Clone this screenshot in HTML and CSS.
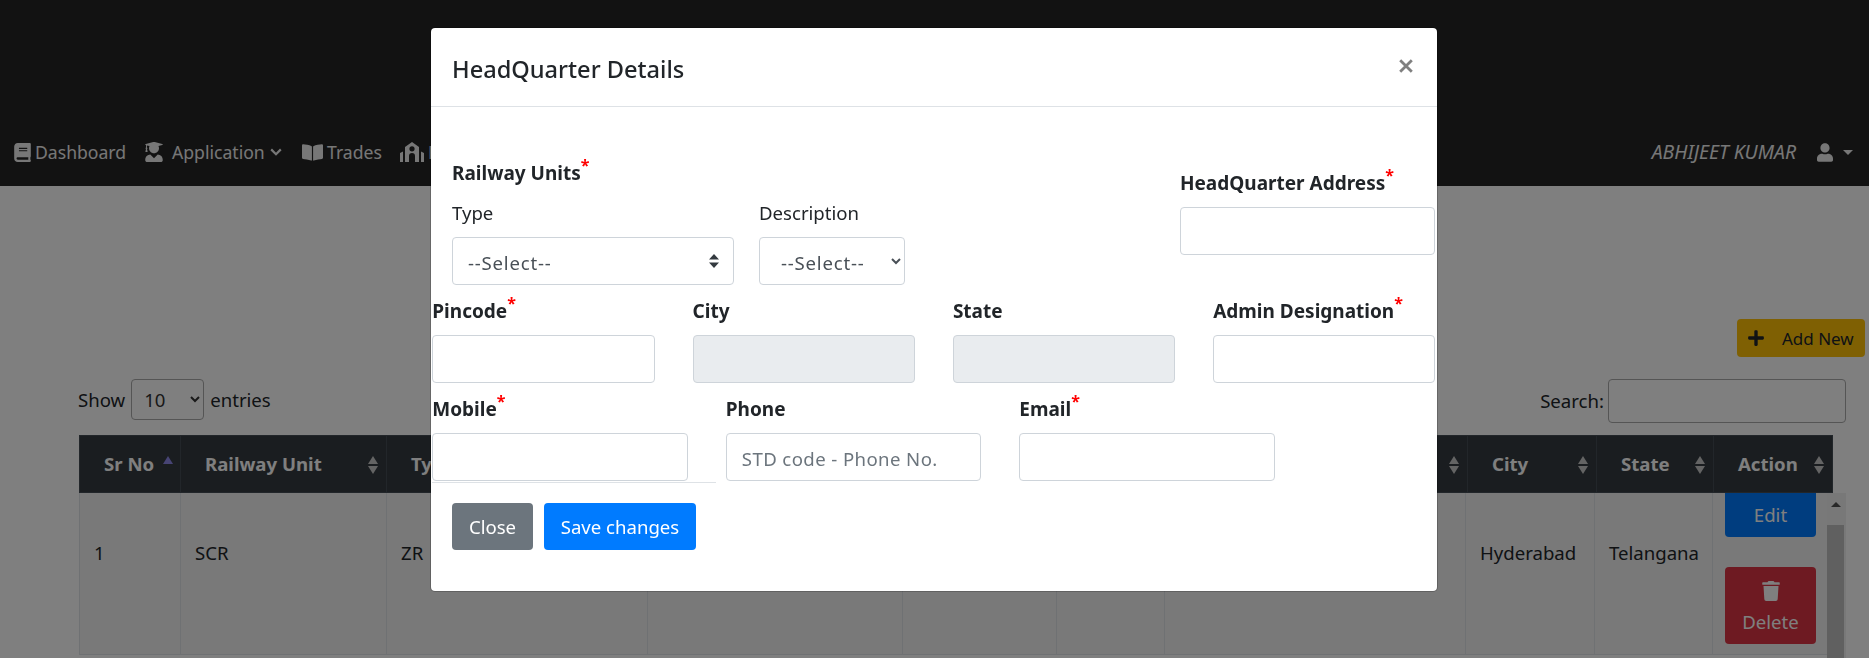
FILE: index.html
```html
<!doctype html>
<html>
<head>
<meta charset="utf-8">
<meta name="viewport" content="width=device-width, initial-scale=1.0">
<link rel="stylesheet" href="styles.css">
<title>HeadQuarter Details</title>
</head>
<body>

<nav class="topbar">
	<ul class="menu">
		<li class="menu-dash">
			<svg class="ico ico-book" viewBox="0 0 448 512"><path d="M448 360V24c0-13.3-10.7-24-24-24H96C43 0 0 43 0 96v320c0 53 43 96 96 96h328c13.3 0 24-10.7 24-24v-16c0-7.5-3.5-14.3-8.9-18.7-4.2-15.4-4.2-59.3 0-74.7 5.4-4.3 8.9-11.1 8.9-18.6zM128 134c0-3.3 2.7-6 6-6h212c3.3 0 6 2.7 6 6v20c0 3.3-2.7 6-6 6H134c-3.3 0-6-2.7-6-6v-20zm0 64c0-3.3 2.7-6 6-6h212c3.3 0 6 2.7 6 6v20c0 3.3-2.7 6-6 6H134c-3.3 0-6-2.7-6-6v-20zm253.4 250H96c-17.7 0-32-14.3-32-32 0-17.6 14.4-32 32-32h285.4c-1.9 17.1-1.9 46.9 0 64z"/></svg>
			Dashboard
		</li>
		<li class="menu-app">
			<svg class="ico ico-grad" viewBox="0 0 448 512"><path d="M319.4 320.6L224 416l-95.4-95.4C57.1 323.7 0 382.2 0 454.4v9.6c0 26.5 21.5 48 48 48h352c26.5 0 48-21.5 48-48v-9.6c0-72.2-57.1-130.7-128.6-133.8zM13.6 79.8l6.4 1.5v58.4c-7 4.2-12 11.5-12 20.3 0 8.4 4.6 15.4 11.1 19.7L3.5 242c-1.7 6.9 2.1 14 7.6 14h41.8c5.5 0 9.3-7.1 7.6-14l-15.6-62.3C51.4 175.4 56 168.4 56 160c0-8.8-5-16.1-12-20.3V87.1l66 15.9c-8.6 17.2-14 36.4-14 57 0 70.7 57.3 128 128 128s128-57.3 128-128c0-20.6-5.3-39.8-14-57l96.3-23.2c18.2-4.4 18.2-27.1 0-31.5l-190.4-46c-13-3.1-26.7-3.1-39.7 0L13.6 48.2c-18.1 4.4-18.1 27.2 0 31.6z"/></svg>
			<span class="app-label">Application</span>
			<svg class="chev" viewBox="0 0 12 8"><path d="M1.2 1.4 6 6.200l4.800-4.800" fill="none" stroke="currentColor" stroke-width="2.200"/></svg>
		</li>
		<li class="menu-trades">
			<svg class="ico ico-open" viewBox="0 0 576 512"><path d="M542.22 32.05c-54.79 3.11-163.69 14.43-230.96 55.59-4.64 2.84-7.27 7.89-7.27 13.17v363.87c0 11.55 12.63 18.85 23.28 13.49 69.21-34.83 169.3-44.33 218.79-46.93 16.89-.89 30.02-14.43 30.02-30.66V62.75c.01-17.71-15.35-31.74-33.86-30.7zM264.73 87.64C197.47 46.48 88.57 35.17 33.78 32.05 15.27 31.01 0 45.04 0 62.75V400.6c0 16.24 13.13 29.78 30.02 30.66 49.51 2.6 149.65 12.11 218.86 46.96 10.62 5.35 23.12-1.94 23.12-13.46V100.63c0-5.29-2.62-10.14-7.27-12.99z"/></svg>
			Trades
		</li>
		<li class="menu-hq">
			<svg class="ico ico-hq" viewBox="0 0 24 20"><path fill-rule="evenodd" d="M12 0l7 5v15h-4v-6a3 3 0 0 0-6 0v6H5V5zm0 4.200a2.600 2.600 0 1 0 0 5.200 2.600 2.600 0 0 0 0-5.200zM0 11l3-1.600V20H0zm24 0-3-1.600V20h3z"/></svg>
			HQ
		</li>
	</ul>
	<div class="who">
		<span class="who-name">ABHIJEET KUMAR</span>
		<svg class="ico ico-user" viewBox="0 0 448 512"><path d="M224 256c70.7 0 128-57.3 128-128S294.7 0 224 0 96 57.3 96 128s57.3 128 128 128zm89.6 32h-16.7c-22.2 10.2-46.9 16-72.9 16s-50.6-5.8-72.9-16h-16.7C60.2 288 0 348.2 0 422.4V464c0 26.5 21.5 48 48 48h352c26.5 0 48-21.5 48-48v-41.6c0-74.2-60.2-134.4-134.4-134.4z"/></svg>
		<span class="caret"></span>
	</div>
</nav>

<main class="page">
	<div class="page-actions">
		<button class="btn-add">
			<svg class="ico ico-plus" viewBox="0 0 448 512"><path d="M416 208H272V64c0-17.67-14.33-32-32-32h-32c-17.67 0-32 14.33-32 32v144H32c-17.67 0-32 14.33-32 32v32c0 17.67 14.33 32 32 32h144v144c0 17.67 14.33 32 32 32h32c17.67 0 32-14.33 32-32V304h144c17.67 0 32-14.33 32-32v-32c0-17.67-14.33-32-32-32z"/></svg>
			Add New
		</button>
	</div>

	<div class="dt">
		<div class="dt-controls">
			<label class="dt-length">Show
				<select class="dt-select"><option>10</option></select>
				entries</label>
			<label class="dt-search">Search: <input class="dt-input" type="text"></label>
		</div>

		<table class="dt-head">
			<colgroup>
				<col class="c1"><col class="c2"><col class="c3"><col class="c4"><col class="c5">
				<col class="c6"><col class="c7h"><col class="c8h"><col class="c9h"><col class="c10h">
			</colgroup>
			<tr>
				<th class="sort-asc">Sr No</th>
				<th class="sorting">Railway Unit</th>
				<th class="sorting">Type</th>
				<th class="sorting"></th>
				<th class="sorting"></th>
				<th class="sorting"></th>
				<th class="sorting"></th>
				<th class="sorting">City</th>
				<th class="sorting">State</th>
				<th class="sorting">Action</th>
			</tr>
		</table>

		<div class="dt-scroll">
			<div class="dt-body">
				<table class="dt-rows">
					<colgroup>
						<col class="c1"><col class="c2"><col class="c3"><col class="c4"><col class="c5">
						<col class="c6"><col class="c7"><col class="c8"><col class="c9"><col class="c10">
					</colgroup>
					<tr>
						<td>1</td>
						<td>SCR</td>
						<td>ZR</td>
						<td></td>
						<td></td>
						<td></td>
						<td></td>
						<td>Hyderabad</td>
						<td>Telangana</td>
						<td class="cell-actions">
							<button class="btn-row btn-edit">
								<svg class="ico ico-row" viewBox="0 0 576 512"><path d="M402.6 83.200l90.200 90.200c3.800 3.800 3.800 10 0 13.800L274.400 405.600l-92.800 10.300c-12.400 1.400-22.900-9.100-21.500-21.500l10.300-92.800L388.800 83.200c3.800-3.800 10-3.800 13.800 0z"/></svg>
								Edit
							</button>
							<button class="btn-row btn-delete">
								<svg class="ico ico-row" viewBox="0 0 448 512"><path d="M432 32H312l-9.400-18.700A24 24 0 0 0 281.100 0H166.800a23.720 23.720 0 0 0-21.400 13.300L136 32H16A16 16 0 0 0 0 48v32a16 16 0 0 0 16 16h416a16 16 0 0 0 16-16V48a16 16 0 0 0-16-16zM53.200 467a48 48 0 0 0 47.900 45h245.800a48 48 0 0 0 47.900-45L416 128H32z"/></svg>
								Delete
							</button>
						</td>
					</tr>
				</table>
			</div>
			<div class="scrollbar">
				<div class="scrollbar-up"></div>
				<div class="scrollbar-thumb"></div>
			</div>
		</div>
	</div>
</main>

<div class="backdrop"></div>

<div class="modal">
	<div class="modal-header">
		<h5 class="modal-title">HeadQuarter Details</h5>
		<svg class="modal-close" viewBox="0 0 14 14"><path d="M1.200 1.200l11.600 11.600M12.800 1.200 1.200 12.800" fill="none" stroke="currentColor" stroke-width="2.800"/></svg>
	</div>
	<form class="modal-body">
		<div class="form-row row-units">
			<div class="units">
				<label class="lbl">Railway Units<sup class="req">*</sup></label>
				<div class="units-fields">
					<div class="f-type">
						<label class="lbl-plain">Type</label>
						<select class="ctl ctl-custom"><option>--Select--</option></select>
					</div>
					<div class="f-desc">
						<label class="lbl-plain">Description</label>
						<select class="ctl ctl-native"><option>--Select--</option></select>
					</div>
				</div>
			</div>
			<div class="f-address">
				<label class="lbl lbl-gap">HeadQuarter Address<sup class="req">*</sup></label>
				<input class="ctl" type="text">
			</div>
		</div>

		<div class="form-row row-four">
			<div>
				<label class="lbl lbl-gap">Pincode<sup class="req">*</sup></label>
				<input class="ctl" type="text">
			</div>
			<div>
				<label class="lbl lbl-gap">City</label>
				<input class="ctl ctl-off" type="text" disabled>
			</div>
			<div>
				<label class="lbl lbl-gap">State</label>
				<input class="ctl ctl-off" type="text" disabled>
			</div>
			<div>
				<label class="lbl lbl-gap">Admin Designation<sup class="req">*</sup></label>
				<input class="ctl" type="text">
			</div>
		</div>

		<div class="form-row row-three">
			<div class="f-mobile">
				<label class="lbl lbl-gap">Mobile<sup class="req">*</sup></label>
				<input class="ctl" type="text">
			</div>
			<div>
				<label class="lbl lbl-gap">Phone</label>
				<input class="ctl" type="text" placeholder="STD code - Phone No.">
			</div>
			<div>
				<label class="lbl lbl-gap">Email<sup class="req">*</sup></label>
				<input class="ctl" type="text">
			</div>
		</div>

		<div class="modal-buttons">
			<button type="button" class="btn-close">Close</button>
			<button type="button" class="btn-save">Save changes</button>
		</div>
	</form>
</div>

</body>
</html>
```

FILE: styles.css
```css
* {
    box-sizing: border-box;
}
html, body {
    height: 658px;
    overflow: hidden;
}
body {
    margin: 0;
    font-family: "Noto Sans", "Open Sans", Arial, sans-serif;
    font-size: 18.6px;
    line-height: 24px;
    color: #212529;
    background-color: #fff;
}
button, input, select {
    font-family: inherit;
    font-size: inherit;
}
.ico {
    display: block;
    fill: currentColor;
    flex: none;
}

/* top bar */
.topbar {
    height: 186px;
    padding: 143px 16px 0 14px;
    display: flex;
    justify-content: space-between;
    background-color: #242424;
    color: #eee;
    line-height: 18px;
}
.menu {
    list-style: none;
    margin: 0;
    padding: 0;
    display: flex;
    height: 18px;
    font-size: 17.6px;
}
.menu li {
    display: flex;
    align-items: center;
}
.menu-dash {
    gap: 4px;
    width: 131px;
}
.ico-book {
    width: 17px;
    height: 19px;
}
.menu-app {
    width: 157px;
}
.ico-grad {
    width: 18px;
    height: 20px;
    margin-right: 9px;
}
.app-label {
    margin-right: 5px;
}
.chev {
    width: 12px;
    height: 8px;
}
.menu-trades {
    gap: 4px;
    width: 98px;
}
.ico-open {
    width: 21px;
    height: 19px;
}
.menu-hq {
    gap: 4px;
}
.ico-hq {
    width: 24px;
    height: 20px;
}
.who {
    display: flex;
    align-items: center;
    height: 18px;
}
.who-name {
    font-style: italic;
    font-size: 19.4px;
    margin-right: 21px;
}
.ico-user {
    width: 16px;
    height: 19px;
    margin-right: 10px;
}
.caret {
    width: 0;
    height: 0;
    border-top: 5px solid #eee;
    border-left: 5.5px solid transparent;
    border-right: 5.5px solid transparent;
}

/* page behind the modal */
.page {
    padding-top: 133px;
}
.page-actions {
    display: flex;
    justify-content: flex-end;
    padding-right: 4px;
}
.btn-add {
    width: 128px;
    height: 38px;
    padding: 0 0 0 11px;
    display: flex;
    align-items: center;
    gap: 18px;
    border: 0;
    border-radius: 4px;
    background-color: #ffc107;
    color: #212529;
    font-size: 17px;
}
.ico-plus {
    width: 16px;
    height: 18px;
}
.dt {
    margin: 22px 23px 0 78px;
}
.dt-controls {
    display: flex;
    justify-content: space-between;
    height: 56px;
}
.dt-length {
    display: flex;
    align-items: center;
    gap: 6px;
    height: 41px;
}
.dt-select {
    width: 73px;
    height: 41px;
    padding: 0 8px;
    border: 1px solid #aaa;
    border-radius: 4px;
    background-color: #fff;
    color: #333;
}
.dt-search {
    display: flex;
    align-items: center;
    gap: 4px;
    height: 44px;
}
.dt-input {
    width: 238px;
    height: 44px;
    border: 1px solid #aaa;
    border-radius: 4px;
    background-color: transparent;
}

table {
    table-layout: fixed;
    border-collapse: collapse;
}
.c1 { width: 101px; }
.c2 { width: 206px; }
.c3 { width: 261px; }
.c4 { width: 255px; }
.c5 { width: 154px; }
.c6 { width: 108px; }
.c7 { width: 301px; }
.c8 { width: 129px; }
.c9 { width: 118px; }
.c10 { width: 115px; }
.c7h { width: 303px; }
.c8h { width: 129px; }
.c9h { width: 117px; }
.c10h { width: 119px; }

.dt-head {
    width: 1753px;
    height: 58px;
    margin-left: 1px;
    background-color: #343a40;
    color: #fff;
}
.dt-head th {
    position: relative;
    padding: 0 0 0 24px;
    text-align: left;
    white-space: nowrap;
    border: 1px solid #454d55;
}
.sorting::before, .sorting::after, .sort-asc::before {
    content: "";
    position: absolute;
    right: 8px;
    width: 0;
    height: 0;
    border-left: 5.5px solid transparent;
    border-right: 5.5px solid transparent;
}
.sorting::before {
    top: 20px;
    border-bottom: 8px solid #c8c8c8;
}
.sorting::after {
    top: 30px;
    border-top: 8px solid #c8c8c8;
}
.sort-asc::before {
    top: 20px;
    right: 7px;
    border-bottom: 8px solid #8e88e8;
}

.dt-scroll {
    display: flex;
    height: 165px;
    overflow: hidden;
}
.dt-body {
    width: 1749px;
    overflow: hidden;
}
/* scrolled down a little, so the row starts above the visible area */
.dt-rows {
    width: 1748px;
    margin: -45px 0 0 1px;
    background-color: #f2f2f2;
}
.dt-rows td {
    height: 206px;
    padding: 3px 14px 0;
    border: 1px solid #dee2e6;
}
.dt-rows .cell-actions {
    padding: 0 0 0 12px;
}
.btn-row {
    width: 91px;
    height: 77px;
    display: flex;
    flex-direction: column;
    align-items: center;
    gap: 8px;
    padding: 14px 0 0;
    border: 0;
    border-radius: 4px;
    color: #fff;
}
.btn-edit {
    margin-bottom: 30px;
    background-color: #007bff;
}
.btn-delete {
    background-color: #dc3545;
}
.ico-row {
    width: 18px;
    height: 20px;
}
.scrollbar {
    width: 19px;
    background-color: #f1f1f1;
    padding-right: 2px;
}
.scrollbar-up {
    width: 0;
    margin: 9px auto 18px;
    border-bottom: 5px solid #505050;
    border-left: 5px solid transparent;
    border-right: 5px solid transparent;
}
.scrollbar-thumb {
    height: 140px;
    background-color: #c1c1c1;
}

/* modal */
.backdrop {
    position: fixed;
    inset: 0;
    background-color: rgba(0, 0, 0, 0.5);
}
.modal {
    position: fixed;
    left: 430px;
    top: 27px;
    width: 1008px;
    height: 565px;
    background-color: #fff;
    border: 1px solid rgba(0, 0, 0, 0.2);
    border-radius: 5px;
    background-clip: padding-box;
}
.modal-header {
    height: 79px;
    padding: 3px 24px 0 21px;
    display: flex;
    align-items: center;
    justify-content: space-between;
    border-bottom: 1px solid #dee2e6;
}
.modal-title {
    margin: 0;
    font-size: 23.6px;
    font-weight: 500;
}
.modal-close {
    width: 14px;
    height: 14px;
    color: #808080;
    margin-top: -5px;
}
.modal-body {
    padding: 54px 0 0 1.3px;
}
.form-row {
    display: flex;
}
.lbl, .lbl-plain {
    display: block;
    height: 24px;
    white-space: nowrap;
}
.lbl {
    font-size: 19px;
    font-weight: 700;
}
.lbl-gap {
    margin-bottom: 12px;
}
.req {
    color: #f00;
    font-weight: 700;
    font-size: 16px;
    line-height: 0;
    position: relative;
    top: -2px;
}
.ctl {
    display: block;
    width: 100%;
    height: 48px;
    padding: 2px 15px 0;
    border: 1px solid #ced4da;
    border-radius: 4px;
    background-color: #fff;
    color: #495057;
}
.ctl::placeholder {
    color: #6c757d;
    letter-spacing: 0.4px;
}
.ctl-off {
    background-color: #e9ecef;
}
.ctl-custom {
    appearance: none;
    letter-spacing: 0.8px;
    background-image: url("data:image/svg+xml,%3csvg xmlns='http://www.w3.org/2000/svg' width='10' height='14'%3e%3cpath fill='%23343a40' d='M5 0 0 5.500h10zM5 14 0 8.500h10z'/%3e%3c/svg%3e");
    background-repeat: no-repeat;
    background-position: right 14px center;
}
.ctl-native {
    padding-left: 17px;
    padding-right: 0;
    letter-spacing: 0.8px;
}
.row-units {
    margin-bottom: 14px;
}
.units {
    margin-left: 19.7px;
}
.units .lbl {
    margin-bottom: 16px;
}
.units-fields {
    display: flex;
    gap: 25px;
}
.lbl-plain {
    margin-bottom: 12px;
}
.f-type {
    width: 282px;
}
.f-desc {
    width: 146px;
}
.f-address {
    width: 255px;
    margin: 10px 0 0 275px;
}
.row-four {
    gap: 38px;
    margin-bottom: 14px;
}
.row-four > div {
    width: 222.3px;
}
.row-three {
    gap: 38px;
}
.row-three > div {
    width: 255.5px;
}
.f-mobile {
    position: relative;
}
.f-mobile::after {
    content: "";
    position: absolute;
    left: 0;
    top: 85px;
    width: 284px;
    border-top: 1px solid #dee2e6;
}
.modal-buttons {
    display: flex;
    gap: 11px;
    margin: 22px 0 0 19.7px;
}
.btn-close, .btn-save {
    height: 47px;
    border: 0;
    border-radius: 4px;
    color: #fff;
    padding: 0;
}
.btn-close {
    width: 81px;
    background-color: #6c757d;
}
.btn-save {
    width: 152px;
    background-color: #007bff;
}
```
